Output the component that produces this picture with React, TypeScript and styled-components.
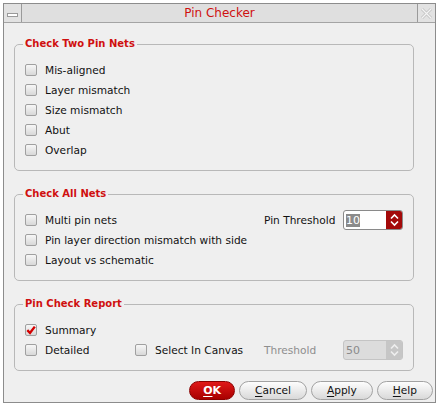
import React from "react";
import styled, { createGlobalStyle, css } from "styled-components";

const GlobalStyle = createGlobalStyle`
  body {
    margin: 0;
    background: #ffffff;
    font-family: "DejaVu Sans", "Liberation Sans", sans-serif;
  }
`;

const RED = "#cf1010";

const Page = styled.div`
  padding: 3px 0 0 3px;
`;

const Window = styled.div`
  width: 433px;
  height: 400px;
  box-sizing: border-box;
  border: 1px solid #8c8c8c;
  background: #efefef;
  display: flex;
  flex-direction: column;
`;

const TitleBar = styled.div`
  display: flex;
  height: 19px;
  box-sizing: border-box;
  border-bottom: 1px solid #a4a4a4;
  background: #dfdfdf;
`;

const TitleButton = styled.div<{ $side: "left" | "right" }>`
  width: 18px;
  box-sizing: border-box;
  display: flex;
  align-items: center;
  justify-content: center;
  background: #e2e2e2;
  ${(p) =>
    p.$side === "left"
      ? css`border-right: 1px solid #9a9a9a;`
      : css`border-left: 1px solid #9a9a9a;`}
`;

const MinIcon = styled.span`
  display: block;
  width: 9px;
  height: 2px;
  margin-top: 3px;
  background: #ffffff;
  border: 1px solid #9a9a9a;
`;

const Title = styled.div`
  flex: 1;
  text-align: center;
  color: ${RED};
  font-size: 12px;
  line-height: 18px;
`;

const Content = styled.div`
  display: flex;
  flex-direction: column;
  gap: 16px;
  padding: 14px 21px 0 10px;
`;

const Group = styled.fieldset`
  margin: 0;
  min-width: 0;
  padding: 9px 9px 10px 10px;
  border: 1px solid #b8b8b8;
  border-radius: 5px;
`;

const Legend = styled.legend`
  padding: 0 2px;
  margin-left: -2px;
  font-size: 10px;
  font-weight: bold;
  line-height: 14px;
  color: ${RED};
`;

const Rows = styled.div`
  display: grid;
  grid-template-columns: 110px 129px 79px 60px;
  grid-auto-rows: 20px;
  align-items: center;
`;

const Option = styled.label<{ $span?: boolean }>`
  display: flex;
  align-items: center;
  gap: 8px;
  font-size: 10.6px;
  color: #111111;
  white-space: nowrap;
  ${(p) => p.$span && css`grid-column: 1 / 3;`}
`;

const FullOption = styled(Option)`
  grid-column: 1 / -1;
`;

const Box = styled.span`
  width: 12px;
  height: 12px;
  box-sizing: border-box;
  border: 1px solid #a0a0a0;
  border-radius: 2px;
  background: linear-gradient(#f7f7f7, #d8d8d8);
  display: flex;
  align-items: center;
  justify-content: center;
`;

const FieldLabel = styled.span<{ $disabled?: boolean }>`
  font-size: 10.6px;
  color: ${(p) => (p.$disabled ? "#8e8e8e" : "#111111")};
  white-space: nowrap;
`;

const Spin = styled.div<{ $disabled?: boolean }>`
  display: flex;
  height: 20px;
  box-sizing: border-box;
  border: 1px solid ${(p) => (p.$disabled ? "#c4c4c4" : "#8a8a8a")};
  border-radius: 3px;
  overflow: hidden;
  background: ${(p) => (p.$disabled ? "#dcdcdc" : "#ffffff")};
`;

const SpinValue = styled.div<{ $disabled?: boolean }>`
  flex: 1;
  display: flex;
  align-items: center;
  padding-left: 2px;
  font-size: 11px;
  color: ${(p) => (p.$disabled ? "#8a8a8a" : "#ffffff")};
  ${(p) => !p.$disabled && css`& > span { background: #8a8a8a; }`}
`;

const SpinArrows = styled.div<{ $disabled?: boolean }>`
  width: 16px;
  display: flex;
  align-items: center;
  justify-content: center;
  background: ${(p) => (p.$disabled ? "#c6c6c6" : "#a30a0a")};
`;

const ButtonBar = styled.div`
  display: flex;
  justify-content: flex-end;
  gap: 4px;
  margin: -6px -19px 0 0;
`;

const Button = styled.button<{ $primary?: boolean }>`
  height: 19px;
  padding: 0 ${(p) => (p.$primary ? "13px" : "15px")};
  border-radius: 10px;
  border: 1px solid ${(p) => (p.$primary ? "#8a0000" : "#a2a2a2")};
  background: ${(p) =>
    p.$primary
      ? "linear-gradient(#e01818, #a80000)"
      : "linear-gradient(#fdfdfd, #d9d9d9)"};
  color: ${(p) => (p.$primary ? "#ffffff" : "#111111")};
  font-family: "DejaVu Sans", sans-serif;
  font-size: ${(p) => (p.$primary ? "11px" : "10.6px")};
  font-weight: ${(p) => (p.$primary ? "bold" : "normal")};
  line-height: 17px;
  & u {
    text-decoration-thickness: 1px;
    text-underline-offset: 2px;
  }
`;

const Check = ({ checked }: { checked?: boolean }) => (
  <Box>
    {checked && (
      <svg width="10" height="10" viewBox="0 0 10 10">
        <path d="M1.3 5.2 L4 8 L8.8 1.6" fill="none" stroke="#d40000" strokeWidth="2.4" />
      </svg>
    )}
  </Box>
);

const Arrows = ({ color }: { color: string }) => (
  <svg width="9" height="14" viewBox="0 0 9 14">
    <path d="M1 5.5 L4.5 2 L8 5.5" fill="none" stroke={color} strokeWidth="1.6" />
    <path d="M1 8.5 L4.5 12 L8 8.5" fill="none" stroke={color} strokeWidth="1.6" />
  </svg>
);

const CloseIcon = () => (
  <svg width="13" height="13" viewBox="0 0 13 13">
    <path d="M2 2 L11 11 M11 2 L2 11" stroke="#c4c4c4" strokeWidth="3" />
    <path d="M2 2 L11 11 M11 2 L2 11" stroke="#f4f4f4" strokeWidth="1.2" />
  </svg>
);

const App = () => {
  return (
    <Page>
      <GlobalStyle />
      <Window>
        <TitleBar>
          <TitleButton $side="left">
            <MinIcon />
          </TitleButton>
          <Title>Pin Checker</Title>
          <TitleButton $side="right">
            <CloseIcon />
          </TitleButton>
        </TitleBar>
        <Content>
          <Group>
            <Legend>Check Two Pin Nets</Legend>
            <Rows>
              {["Mis-aligned", "Layer mismatch", "Size mismatch", "Abut", "Overlap"].map((t) => (
                <FullOption key={t}>
                  <Check />
                  {t}
                </FullOption>
              ))}
            </Rows>
          </Group>
          <Group>
            <Legend>Check All Nets</Legend>
            <Rows>
              <Option $span>
                <Check />
                Multi pin nets
              </Option>
              <FieldLabel>Pin Threshold</FieldLabel>
              <Spin>
                <SpinValue>
                  <span>10</span>
                </SpinValue>
                <SpinArrows>
                  <Arrows color="#ffffff" />
                </SpinArrows>
              </Spin>
              <FullOption>
                <Check />
                Pin layer direction mismatch with side
              </FullOption>
              <FullOption>
                <Check />
                Layout vs schematic
              </FullOption>
            </Rows>
          </Group>
          <Group>
            <Legend>Pin Check Report</Legend>
            <Rows>
              <FullOption>
                <Check checked />
                Summary
              </FullOption>
              <Option>
                <Check />
                Detailed
              </Option>
              <Option>
                <Check />
                Select In Canvas
              </Option>
              <FieldLabel $disabled>Threshold</FieldLabel>
              <Spin $disabled>
                <SpinValue $disabled>50</SpinValue>
                <SpinArrows $disabled>
                  <Arrows color="#eeeeee" />
                </SpinArrows>
              </Spin>
            </Rows>
          </Group>
          <ButtonBar>
            <Button $primary>
              <u>O</u>K
            </Button>
            <Button>
              <u>C</u>ancel
            </Button>
            <Button>
              <u>A</u>pply
            </Button>
            <Button>
              <u>H</u>elp
            </Button>
          </ButtonBar>
        </Content>
      </Window>
    </Page>
  );
};

export default App;
